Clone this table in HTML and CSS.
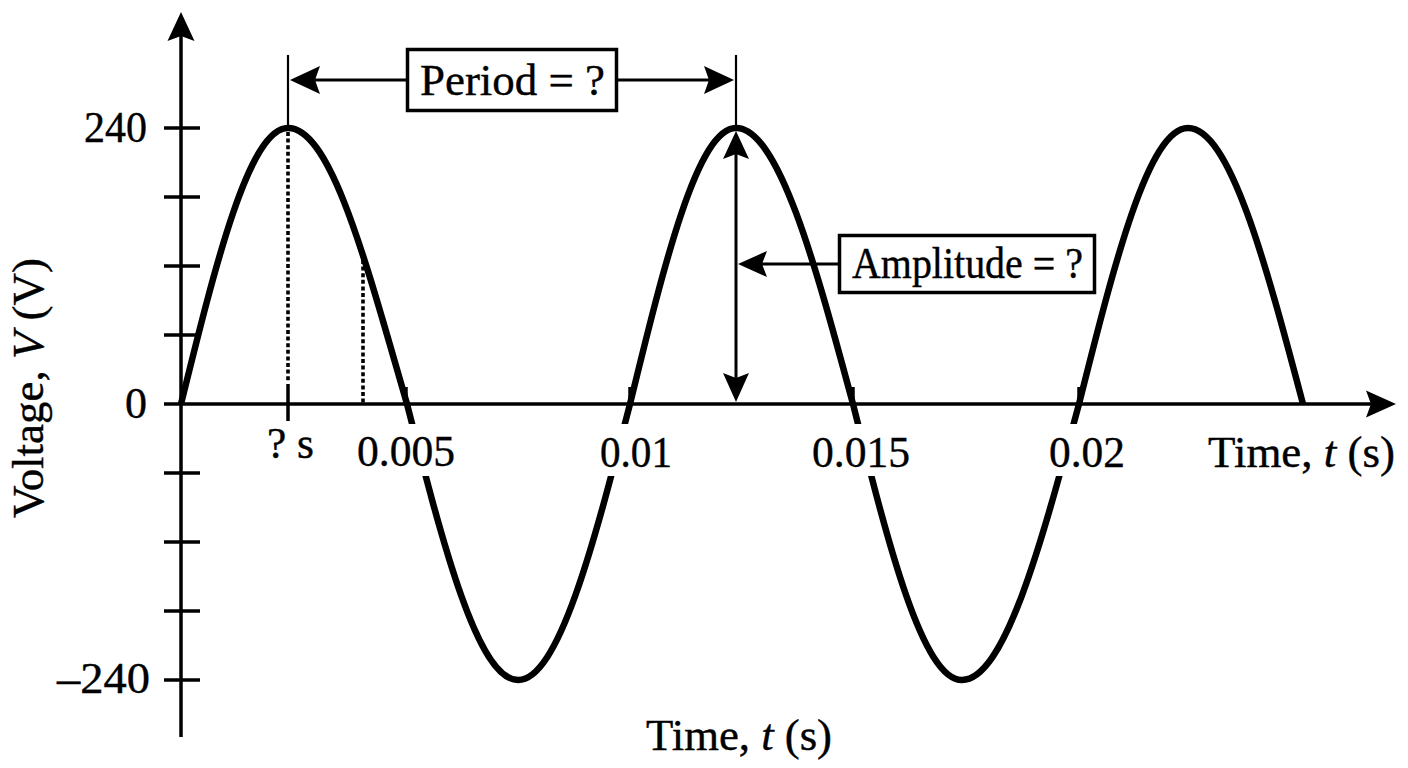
FILE: index.html
```html
<!DOCTYPE html>
<html lang="en">
<head>
<meta charset="utf-8">
<title>Voltage vs Time</title>
<link rel="stylesheet" href="styles.css">
</head>
<body>
<div class="figure">
<svg class="chart" width="1408" height="768" viewBox="0 0 1408 768" xmlns="http://www.w3.org/2000/svg">
  <!-- sine curve -->
  <path class="wave" d="M181,404 C215.9,262.61 249.28,128 288,128 C331.07,128 366,262.61 407,404 C443.2,545.39 477.83,680 518,680 C558.53,680 593.47,545.39 630,404 C664.57,262.61 697.64,128 736,128 C778.34,128 814.84,262.61 853,404 C888.55,545.39 922.55,680 962,680 C1004.34,680 1040.84,545.39 1079,404 C1114.55,262.61 1148.55,128 1188,128 C1229.62,128 1265.49,262.61 1303,404"/>

  <!-- label knockouts -->
  <rect class="knock" x="355" y="424" width="102" height="52"/>
  <rect class="knock" x="596" y="424" width="80" height="52"/>
  <rect class="knock" x="808" y="424" width="106" height="52"/>
  <rect class="knock" x="1045" y="424" width="84" height="52"/>

  <!-- dotted guides -->
  <line class="dots" x1="288" y1="132" x2="288" y2="382"/>
  <line class="dots" x1="363" y1="260" x2="363" y2="404"/>

  <!-- axes -->
  <line class="axis" x1="181" y1="30" x2="181" y2="737"/>
  <line class="axis" x1="164" y1="404" x2="1372" y2="404"/>
  <path class="head" d="M181,12 L194.5,41 L181,36 L167.5,41 Z"/>
  <path class="head" d="M1396,404 L1366,417.5 L1371,404 L1366,390.5 Z"/>

  <!-- ticks -->
  <g class="tick">
    <line x1="164" y1="128" x2="200" y2="128"/>
    <line x1="164" y1="197" x2="200" y2="197"/>
    <line x1="164" y1="266" x2="200" y2="266"/>
    <line x1="164" y1="335" x2="200" y2="335"/>
    <line x1="164" y1="473" x2="200" y2="473"/>
    <line x1="164" y1="542" x2="200" y2="542"/>
    <line x1="164" y1="611" x2="200" y2="611"/>
    <line x1="164" y1="680" x2="200" y2="680"/>
    <line x1="288" y1="384" x2="288" y2="421"/>
    <line x1="406" y1="387" x2="406" y2="404"/>
    <line x1="630" y1="387" x2="630" y2="404"/>
    <line x1="853" y1="387" x2="853" y2="404"/>
    <line x1="1079" y1="387" x2="1079" y2="404"/>
  </g>

  <!-- period annotation -->
  <line class="thin" x1="288" y1="55" x2="288" y2="128"/>
  <line class="thin" x1="736" y1="55" x2="736" y2="128"/>
  <line class="arrow" x1="300" y1="80" x2="406" y2="80"/>
  <line class="arrow" x1="618" y1="80" x2="724" y2="80"/>
  <path class="head" d="M290,80 L320,66 L315,80 L320,94 Z"/>
  <path class="head" d="M734,80 L704,66 L709,80 L704,94 Z"/>
  <rect class="box" x="407.5" y="49.5" width="209" height="61"/>

  <!-- amplitude annotation -->
  <line class="arrow" x1="736" y1="145" x2="736" y2="390"/>
  <path class="head" d="M736,131 L749,159 L736,154 L723,159 Z"/>
  <path class="head" d="M736,402 L749,373 L736,378 L723,373 Z"/>
  <line class="arrow" x1="750" y1="264" x2="838" y2="264"/>
  <path class="head" d="M738,264 L767,251 L762,264 L767,277 Z"/>
  <rect class="box" x="839.5" y="235.5" width="255" height="57"/>

  <!-- texts -->
  <g class="label">
    <text x="420" y="95" textLength="185" lengthAdjust="spacingAndGlyphs">Period = ?</text>
    <text x="852" y="278" textLength="231" lengthAdjust="spacingAndGlyphs">Amplitude = ?</text>

    <text x="84" y="142" textLength="63" lengthAdjust="spacingAndGlyphs">240</text>
    <text x="147" y="418" text-anchor="end">0</text>
    <text x="57" y="693" textLength="93" lengthAdjust="spacingAndGlyphs">–240</text>

    <text x="267" y="458" textLength="47" lengthAdjust="spacingAndGlyphs">? s</text>
    <text x="357" y="466" textLength="98" lengthAdjust="spacingAndGlyphs">0.005</text>
    <text x="600" y="467" textLength="72" lengthAdjust="spacingAndGlyphs">0.01</text>
    <text x="812" y="467" textLength="98" lengthAdjust="spacingAndGlyphs">0.015</text>
    <text x="1049" y="467" textLength="76" lengthAdjust="spacingAndGlyphs">0.02</text>

    <text x="1208" y="467" textLength="187" lengthAdjust="spacingAndGlyphs">Time, <tspan class="ital">t</tspan> (s)</text>
    <text x="646" y="750" textLength="186" lengthAdjust="spacingAndGlyphs">Time, <tspan class="ital">t</tspan> (s)</text>
    <text transform="translate(43,518) rotate(-90)" textLength="260" lengthAdjust="spacingAndGlyphs">Voltage, <tspan class="ital">V</tspan> (V)</text>
  </g>
</svg>
</div>
</body>
</html>
```

FILE: styles.css
```css
html, body {
  margin: 0;
  padding: 0;
  background: #ffffff;
}

.figure {
  width: 1408px;
  height: 768px;
  overflow: hidden;
}

.chart {
  display: block;
}

.wave {
  fill: none;
  stroke: #000;
  stroke-width: 6.5;
  stroke-linejoin: round;
}

.knock {
  fill: #fff;
  stroke: none;
}

.dots {
  stroke: #000;
  stroke-width: 3.6;
  stroke-dasharray: 4 2.6;
}

.axis {
  stroke: #000;
  stroke-width: 3.5;
}

.tick line {
  stroke: #000;
  stroke-width: 3.5;
}

.thin {
  stroke: #000;
  stroke-width: 2.2;
}

.arrow {
  stroke: #000;
  stroke-width: 3;
}

.head {
  fill: #000;
  stroke: none;
}

.box {
  fill: #fff;
  stroke: #000;
  stroke-width: 3.5;
}

.label {
  font-family: "Liberation Serif", "Times New Roman", serif;
  font-size: 44px;
  fill: #000;
  stroke: #000;
  stroke-width: 0.4;
}

.ital {
  font-style: italic;
}
```
